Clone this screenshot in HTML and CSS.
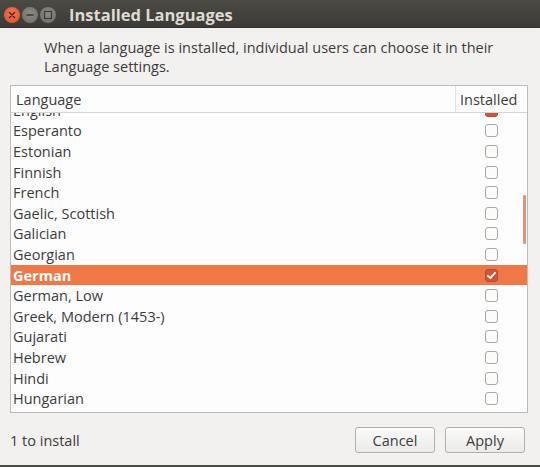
FILE: index.html
```html
<!DOCTYPE html>
<html>
<head>
<meta charset="utf-8">
<link rel="stylesheet" href="styles.css">
</head>
<body>
<div class="window">
  <div class="titlebar">
    <div class="wbtns">
      <span class="wbtn close"><svg width="16" height="16" viewBox="0 0 16 16"><path d="M5.5 5.5 L10.5 10.5 M10.5 5.5 L5.5 10.5" stroke="#4a1d10" stroke-width="1.4" stroke-linecap="round"/></svg></span>
      <span class="wbtn"><svg width="16" height="16" viewBox="0 0 16 16"><path d="M4.5 8 H11.5" stroke="#3c3b37" stroke-width="1.6"/></svg></span>
      <span class="wbtn"><svg width="16" height="16" viewBox="0 0 16 16"><rect x="4.5" y="4.5" width="7" height="7" fill="none" stroke="#3c3b37" stroke-width="1.2"/></svg></span>
    </div>
    <div class="title">Installed Languages</div>
  </div>
  <div class="body">
    <p class="desc">When a language is installed, individual users can choose it in their Language settings.</p>
    <div class="list">
      <div class="head">
        <div class="hcol lang">Language</div>
        <div class="hcol inst">Installed</div>
      </div>
      <div class="viewport">
        <div class="rows">
          <div class="row"><span class="name">English</span><span class="cb checked"></span></div>
          <div class="row"><span class="name">Esperanto</span><span class="cb"></span></div>
          <div class="row"><span class="name">Estonian</span><span class="cb"></span></div>
          <div class="row"><span class="name">Finnish</span><span class="cb"></span></div>
          <div class="row"><span class="name">French</span><span class="cb"></span></div>
          <div class="row"><span class="name">Gaelic, Scottish</span><span class="cb"></span></div>
          <div class="row"><span class="name">Galician</span><span class="cb"></span></div>
          <div class="row"><span class="name">Georgian</span><span class="cb"></span></div>
          <div class="row sel"><span class="name">German</span><span class="cb checked"><svg width="13" height="13" viewBox="0 0 13 13"><path d="M3 6.8 L5.4 9.2 L10 3.8" fill="none" stroke="#fff" stroke-width="1.8" stroke-linecap="round" stroke-linejoin="round"/></svg></span></div>
          <div class="row"><span class="name">German, Low</span><span class="cb"></span></div>
          <div class="row"><span class="name">Greek, Modern (1453-)</span><span class="cb"></span></div>
          <div class="row"><span class="name">Gujarati</span><span class="cb"></span></div>
          <div class="row"><span class="name">Hebrew</span><span class="cb"></span></div>
          <div class="row"><span class="name">Hindi</span><span class="cb"></span></div>
          <div class="row"><span class="name">Hungarian</span><span class="cb"></span></div>
        </div>
        <div class="scrollbar"></div>
      </div>
    </div>
    <div class="footer">
      <span class="status">1 to install</span>
      <div class="buttons">
        <button class="btn">Cancel</button>
        <button class="btn">Apply</button>
      </div>
    </div>
  </div>
</div>
</body>
</html>
```
FILE: styles.css
```css
html, body {
  margin: 0;
  padding: 0;
  background: #f2f1f0;
}
.window {
  width: 540px;
  height: 467px;
  display: flex;
  flex-direction: column;
  font-family: "Open Sans", "Noto Sans", sans-serif;
  color: #3c3c3c;
  border-bottom: 2px solid #4a4a47;
  box-sizing: border-box;
  overflow: hidden;
}
.titlebar {
  height: 28px;
  flex: none;
  background: linear-gradient(#4b4a45, #3c3b37);
  display: flex;
  align-items: center;
  border-bottom: 1px solid #2f2e2b;
  box-sizing: border-box;
}
.wbtns {
  display: flex;
  gap: 2px;
  padding-left: 4px;
  width: 65px;
  box-sizing: border-box;
}
.wbtn {
  width: 16px;
  height: 16px;
  border-radius: 50%;
  background: radial-gradient(circle at 50% 40%, #8d8c86, #6b6a65);
  display: block;
  margin-top: 2px;
}
.wbtn svg { display: block; }
.wbtn.close {
  background: radial-gradient(circle at 50% 40%, #f27a52, #dc4a2a);
}
.title {
  color: #dfdbd2;
  font-weight: 700;
  font-size: 16.5px;
  padding-left: 4px;
  margin-top: 1px;
}
.body {
  flex: 1;
  display: flex;
  flex-direction: column;
  padding: 8px 12px 0 10px;
}
.desc {
  margin: 2px 0 0 34px;
  font-size: 14.5px;
  line-height: 19px;
  width: 480px;
}
.list {
  margin-top: 9px;
  width: 518px;
  height: 328px;
  border: 1px solid #bdbcb8;
  background: #fdfdfd;
  box-sizing: border-box;
  display: flex;
  flex-direction: column;
}
.head {
  height: 27px;
  flex: none;
  display: flex;
  border-bottom: 1px solid #d6d5d2;
  box-sizing: border-box;
  font-size: 14.5px;
}
.hcol {
  display: flex;
  align-items: center;
}
.hcol.lang {
  width: 439px;
  padding-left: 5px;
  border-right: 1px solid #e3e2df;
}
.hcol.inst {
  padding-left: 4px;
}
.viewport {
  flex: 1;
  overflow: hidden;
  position: relative;
}
.rows {
  margin-top: -13px;
}
.row {
  height: 20.6px;
  display: flex;
  align-items: center;
  font-size: 14.5px;
}
.row .name {
  width: 472px;
  padding-left: 2px;
}
.cb {
  width: 13px;
  height: 13px;
  border: 1px solid #a9a8a4;
  border-radius: 3px;
  box-sizing: border-box;
  background: #fbfbfa;
}
.cb.checked {
  background: #c8583a;
  border-color: #b84c30;
}
.cb svg { display: block; margin: -1px; }
.row.sel {
  background: #f07746;
  color: #fff;
  font-weight: 700;
}
.scrollbar {
  position: absolute;
  right: 1px;
  top: 82px;
  width: 3px;
  height: 49px;
  background: #e1937a;
  border-radius: 1px;
}
.footer {
  display: flex;
  justify-content: space-between;
  align-items: center;
  margin-top: 14px;
}
.status {
  font-size: 14.5px;
}
.buttons {
  display: flex;
  gap: 10px;
  margin-right: 3px;
}
.btn {
  width: 80px;
  height: 26px;
  border: 1px solid #b1b0ab;
  border-radius: 3px;
  background: linear-gradient(#fbfbfa, #ebeae8);
  font-family: "Open Sans", "Noto Sans", sans-serif;
  font-size: 14.5px;
  color: #3c3c3c;
  padding: 0;
}
```
